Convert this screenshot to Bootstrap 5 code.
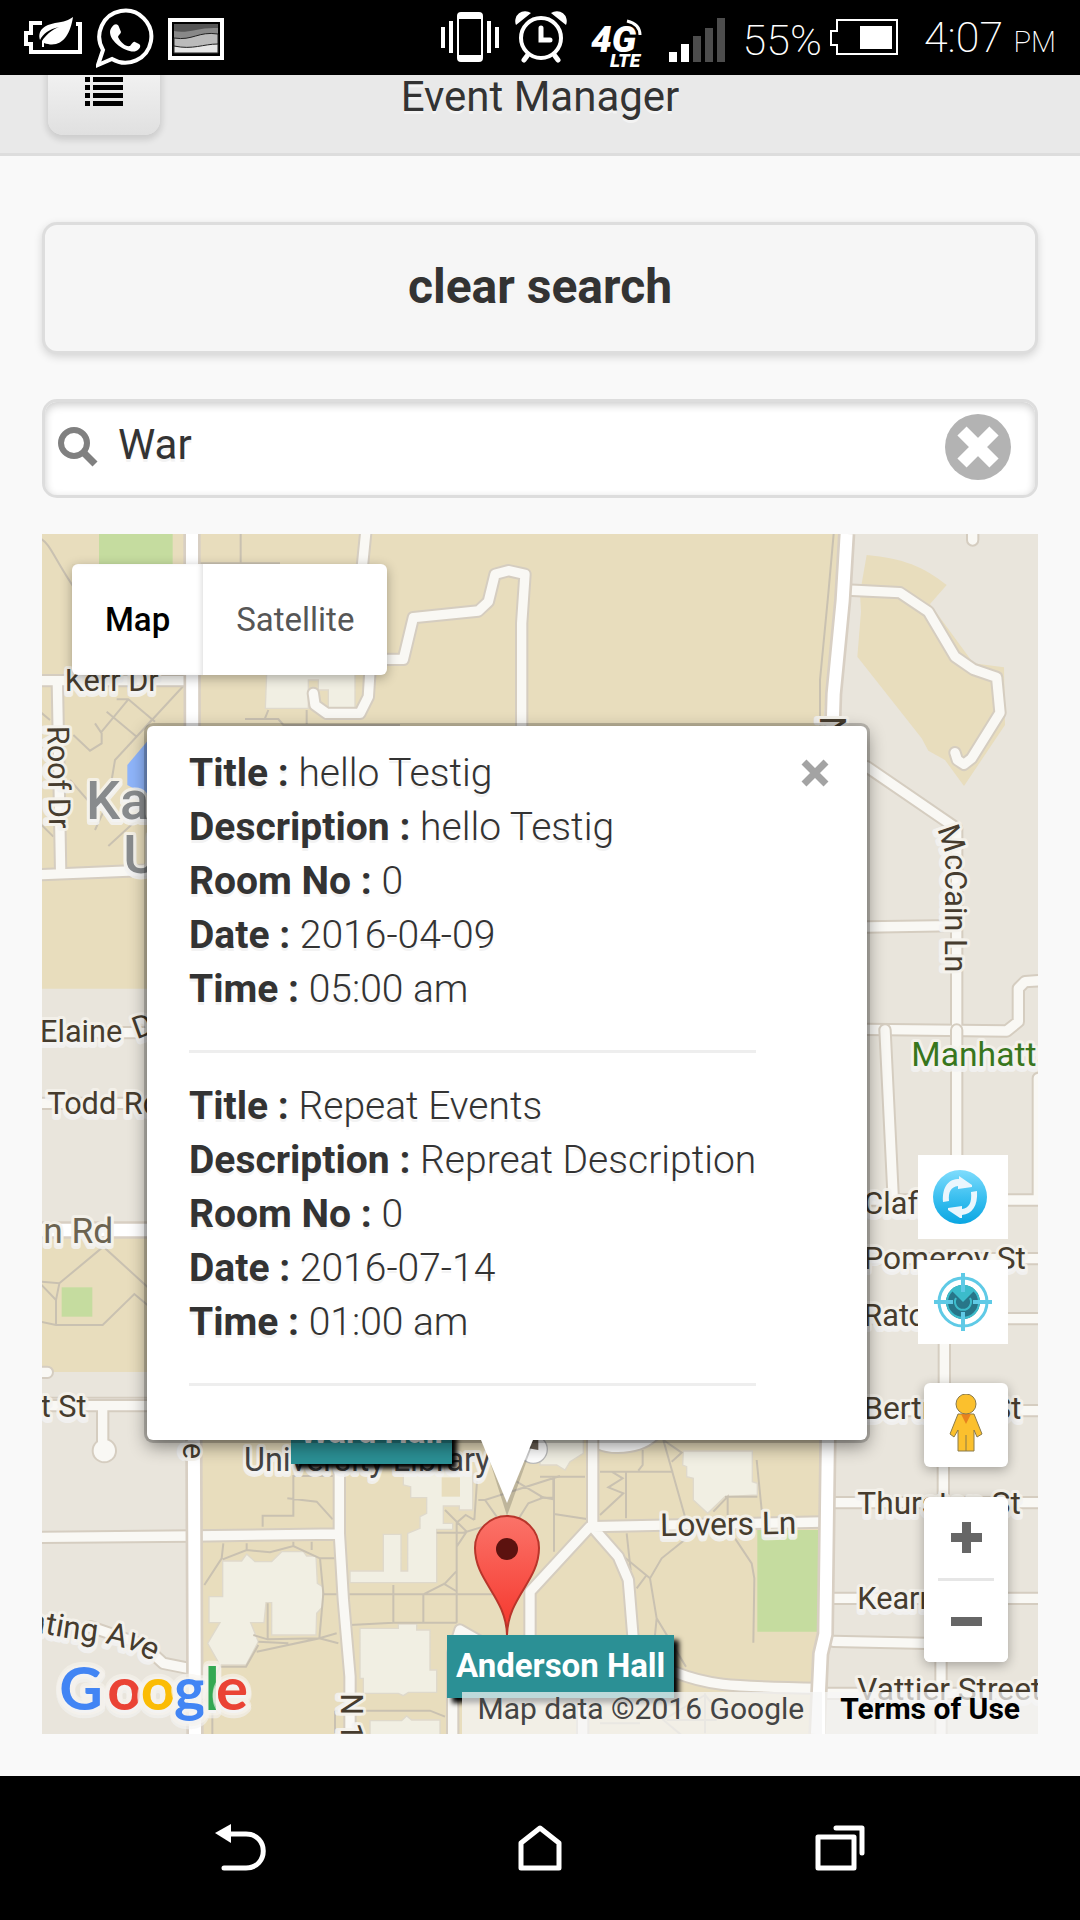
<!DOCTYPE html>
<html lang="en">
<head>
<meta charset="utf-8">
<meta name="viewport" content="width=device-width, initial-scale=1">
<title>Event Manager</title>
<link href="https://cdn.jsdelivr.net/npm/bootstrap@5.3.0/dist/css/bootstrap.min.css" rel="stylesheet">
<style>
body{background:#f9f9f9;color:#333;font-family:Roboto,"Liberation Sans",sans-serif;font-size:39px;line-height:54px;text-shadow:0 3px 0 #f3f3f3}
svg{display:block;flex:none}
button{font-family:inherit}
.status{background:#000;color:#fff;height:75px;padding:0 24px;text-shadow:none;font-weight:200;font-size:43px}
.status .notices{gap:14px}
.status .meridiem{font-size:29px}
.apphead{background:#e9e9e9;border-bottom:3px solid #ddd;height:81px;overflow:hidden}
.apphead h1{font-size:42px;line-height:54px;font-weight:400;margin:0;padding-bottom:29px}
.menu-btn{border:0;width:112px;height:112px;border-radius:15px;background:linear-gradient(#fff,#e0e0e0);box-shadow:0 3px 6px 2px rgba(0,0,0,.12);margin-bottom:18px;padding-top:42px}
.page{padding:66px 42px 42px}
.clear-btn{border:3px solid #ddd;border-radius:15px;background:#f6f6f6;color:#333;font-size:48px;line-height:60px;font-weight:700;padding:32px 33px 34px;box-shadow:0 3px 9px rgba(0,0,0,.15);margin-bottom:45px;text-shadow:0 3px 0 #f3f3f3}
.searchbox{border:3px solid #ddd;border-radius:15px;background:#fff;height:99px;padding:0 24px 4px 12px;box-shadow:inset 0 3px 9px rgba(0,0,0,.2);margin-bottom:36px}
.searchbox label{margin-right:20px}
.searchbox input{border:0;outline:0;background:none;font-size:42px;color:#333;padding:0 0 4px;min-width:0;text-shadow:0 3px 0 #f3f3f3}
.wipe{border:0;background:none;padding:0}
.mapbox{min-height:1200px;background:#e9e5dc}
.mapart{position:absolute;inset:0;width:100%;height:100%}
.maptypes{position:absolute;left:30px;top:30px;box-shadow:0 3px 12px rgba(0,0,0,.3);border-radius:6px;background:#fff}
.maptypes button{border:0;background:none;font-size:33px;line-height:45px;padding:33px;color:#565656}
.maptypes .on{color:#000;font-weight:500;box-shadow:inset -4px 0 5px -2px rgba(0,0,0,.12)}
.info{position:absolute;left:105px;top:192px;width:720px;background:#fff;border-radius:6px;padding:20px 42px 54px;box-shadow:0 0 0 3px rgba(0,0,0,.2),0 6px 18px rgba(0,0,0,.45)}
.info dl{margin:0;width:567px;border-bottom:3px solid #eee;padding-bottom:34px}
.info dl+dl{padding-top:26px}
.info dl>div{white-space:nowrap}
.info dt,.info dd{display:inline;margin:0}
.info dd{font-weight:300}
.info .shut{position:absolute;right:38px;top:33px;border:0;background:none;padding:0}
.beak{position:absolute;left:438px;top:906px}
.marker{position:absolute;left:432px;top:981px}
.tag{position:absolute;background:#2b9095;color:#fff;font-size:33px;line-height:39px;font-weight:700;padding:11px 9px 13px;text-shadow:none;box-shadow:5px 5px 5px #000;white-space:nowrap}
.tag-anderson{left:405px;top:1101px}
.tag-ward{left:249px;top:867px}
.attrib{position:absolute;right:0;bottom:0;font-size:30px;line-height:34px;text-shadow:none}
.attrib>*{background:rgba(245,245,245,.72);padding:0 18px 8px 15px;color:#444;text-decoration:none}
.attrib .terms{color:#000;font-weight:700;border-left:3px solid #fff}
.controls{position:absolute;right:30px;bottom:72px}
.controls button{border:0;background:#fff;padding:0}
.sq{width:90px;height:84px;margin-bottom:21px}
.peg{width:84px;height:84px;border-radius:6px;margin:18px 0 30px;box-shadow:0 3px 12px rgba(0,0,0,.3)}
.zoomer{width:84px;border-radius:6px;box-shadow:0 3px 12px rgba(0,0,0,.3);background:#fff;overflow:hidden}
.zoomer button{width:84px;height:81px}
.zoomer hr{margin:0 14px;border-top:3px solid #e6e6e6;opacity:1}
.softkeys{background:#000;height:144px;padding:0 90px}
.softkeys button{flex:1;border:0;background:none;padding:0}
.rc{fill:none;stroke:#d5cdc0;stroke-width:40;stroke-linejoin:round;stroke-linecap:round}
.rf{fill:none;stroke:#f9f8f4;stroke-width:28;stroke-linejoin:round;stroke-linecap:round}
.bc{fill:none;stroke:#d8cfc3;stroke-width:52}
.bf{fill:none;stroke:#fff;stroke-width:36}
.foot{fill:none;stroke:#c9c1b1;stroke-width:6}
.tan{fill:#e8ddbd}.bld{fill:#f1efe3;stroke:#dfd9cb;stroke-width:4}.park{fill:#c5dc9f}
.lbl text{font-family:Roboto,sans-serif;font-size:92px;fill:#463c2e;stroke:#f6f3ec;stroke-width:18px;stroke-opacity:.85;stroke-linejoin:round;paint-order:stroke}
</style>
</head>
<body class="min-vh-100 d-flex flex-column">
<div class="status d-flex align-items-center justify-content-between">
  <div class="notices d-flex align-items-center">
    <svg width="58" height="75" viewBox="25 0 58 75" fill="none" stroke="#fff" stroke-width="4"><path d="M43 23H32V33H27V44H32V52H81V24H77"/><path fill="#fff" stroke="none" d="M74 17C71 36 62 49 45 43L45 47 43 47 43 41C46 36 52 30 60 27 50 29 44 34 41 40 38 30 46 25 56 23 65 22 70 20 74 17Z"/></svg>
    <svg width="58" height="75" viewBox="97 0 58 75"><path d="M99 65L104 50A26 26 0 1 1 113 59Z" fill="none" stroke="#fff" stroke-width="4"/><path fill="#fff" d="M113 27C116 23 119 24 120 27L122 32C122 34 119 35 119 37 122 43 127 47 131 46 133 44 134 41 136 42L140 44C143 46 140 50 137 51 130 54 111 43 111 32 111 30 112 28 113 27Z"/></svg>
    <svg width="56" height="75" viewBox="170 0 56 75"><path fill="#fff" d="M170 18H226V60H170Z"/><path d="M174 22H222V56H174Z"/><path fill="#555" d="M176 24H220V53H176Z"/><path fill="#888" d="M176 31C190 34 200 27 220 28V53H176Z"/><path fill="#bbb" stroke="#222" d="M176 38C195 41 200 31 220 34V53H176Z"/><path fill="#e6e6e6" stroke="#222" d="M176 46C195 50 205 44 220 44V53H176Z"/></svg>
  </div>
  <div class="d-flex align-items-center gap-3">
    <svg width="58" height="75" viewBox="444 0 58 75" fill="#fff"><path d="M444 27h4v21h-4zM452 21h4v32h-4zM490 21h4v32h-4zM498 27h4v21h-4z"/><path fill-rule="evenodd" d="M464 12h18q4 0 4 4v42q0 4-4 4h-18q-4 0-4-4V16q0-4 4-4zM462 19v36h22V19z"/></svg>
    <svg width="60" height="75" viewBox="519 0 60 75" fill="none" stroke="#fff" stroke-width="4" stroke-linecap="round"><circle cx="545" cy="38" r="20"/><path stroke-width="5" d="M545 28V40H554M531 56L528 60M559 56L562 60"/><path fill="#fff" stroke="none" d="M520 25A10 10 0 0 1 535 13ZM570 25A10 10 0 0 0 555 13Z"/></svg>
    <svg width="60" height="75" viewBox="594 0 60 75" fill="#fff"><g font-family="Roboto,sans-serif" font-style="italic" font-weight="900"><text x="594" y="52" font-size="37">4G</text><text x="613" y="67" font-size="19">LTE</text></g><path d="M630 21Q643 24 643 35" fill="none" stroke="#fff" stroke-width="3"/></svg>
    <svg width="60" height="75" viewBox="671 0 60 75"><path fill="#fff" d="M673 52h8v10h-8zM685 44h8v18h-8z"/><path fill="#4d4d4d" d="M697 36h8v26h-8zM709 28h8v34h-8zM721 18h8v44h-8z"/></svg>
    <div class="d-flex align-items-center"><span class="me-2 pt-1">55%</span>
    <svg class="me-4" width="70" height="75" viewBox="834 0 70 75"><path fill="none" stroke="#fff" stroke-width="2" d="M841 20H901V54H841V45H835V31H841Z"/><path fill="#fff" d="M864 26h32v23h-32z"/></svg>
    <span class="pt-1">4:07 <span class="meridiem">PM</span></span></div>
  </div>
</div>
<header class="apphead position-relative d-flex align-items-end justify-content-center">
  <button class="menu-btn position-absolute bottom-0 start-0 d-flex justify-content-center ms-5" aria-label="Menu"><svg width="38" height="42" viewBox="0 0 38 42"><path d="M0 12h5v5H0zM8 12h30v5H8zM0 20h5v5H0zM8 20h30v5H8zM0 28h5v5H0zM8 28h30v5H8zM0 36h5v5H0zM8 36h30v5H8z"/></svg></button>
  <h1>Event Manager</h1>
</header>
<main class="page flex-grow-1 d-flex flex-column">
  <button class="clear-btn w-100">clear search</button>
  <div class="searchbox d-flex align-items-center">
    <label for="q"><svg width="41" height="42" viewBox="0 0 41 42" fill="none" stroke="#808080" stroke-width="6"><circle cx="17" cy="17" r="13"/><path stroke-width="7" d="M26 26L38 38"/></svg></label>
    <input id="q" type="text" class="flex-grow-1" value="War" aria-label="Search">
    <button class="wipe" aria-label="Clear text"><svg width="66" height="66" viewBox="0 0 66 66"><circle cx="33" cy="33" r="33" fill="#b3b3b3"/><path d="M17 17L49 49M49 17L17 49" stroke="#fff" stroke-width="13"/></svg></button>
  </div>
  <div class="mapbox flex-grow-1 position-relative overflow-hidden">
    <svg class="mapart" viewBox="0 0 2988 3600" preserveAspectRatio="xMidYMid slice">
      <path class="tan" d="M0 0H2400L2340 600V1364H0ZM0 2112H330V2514H0ZM475 2650H2350L2320 3600H475Z"/>
      <!-- north-west campus -->
      <g transform="translate(-6 -12)">
        <path class="park" d="M177 12H398V105H177Z"/><path fill="#8fb5fb" d="M262 705L325 630V800L262 765Z"/>
        <path class="bld" d="M680 430H945V535H865V480H835V450H805V535H676Z"/>
        <path class="foot" d="M0 25C30 40 40 80 100 170M602 12V98M480 100H720M230 508H265L345 575M165 580L185 610V640L150 662 100 615M200 545L290 620M265 508L185 605M430 468L225 690 215 750M290 620L335 570M0 545L30 570M90 750L160 830M165 900L215 790M205 948L290 870M0 880L40 920M615 567H715L730 585H1080M675 565L685 540M800 540V585"/>
        <path class="rc" d="M0 452H440M52 452L62 1030M0 1034L340 1020M978 0L966 120M990 420L985 500 960 550H860L825 525 820 490M1040 388L1090 388 1120 263 1315 243 1345 215 1365 133 1405 122 1455 133 1445 280V590"/>
        <path class="rf" d="M0 452H440M52 452L62 1030M0 1034L340 1020M978 0L966 120M990 420L985 500 960 550H860L825 525 820 490M1040 388L1090 388 1120 263 1315 243 1345 215 1365 133 1405 122 1455 133 1445 280V590"/>
      </g>
      <!-- north-east -->
      <g transform="translate(1494 -12)">
        <path fill="#e9e5dc" d="M920 0H1500V1300H860V560Z"/>
        <path class="tan" d="M980 75C1090 85 1150 110 1220 165L1170 222 1300 400 1392 412 1395 585 1272 768 1215 690 1165 662 1145 625 952 380 963 245 960 190Z"/>
        <path class="foot" d="M882 0L865 190 840 450V590"/>
        <path class="rc" d="M920 180L1080 188 1165 245 1245 380 1300 418 1370 442 1380 548 1295 685 1272 703 1252 690 1245 668M1298 0V30M980 710L1250 895V1500M980 1191L1240 1187M980 1498L1400 1503 1435 1475V1375L1455 1355 1500 1352"/>
        <path class="rf" d="M920 180L1080 188 1165 245 1245 380 1300 418 1370 442 1380 548 1295 685 1272 703 1252 690 1245 668M1298 0V30M980 710L1250 895V1500M980 1191L1240 1187M980 1498L1400 1503 1435 1475V1375L1455 1355 1500 1352"/>
      </g>
      <!-- west -->
      <g transform="translate(-6 1458)">
        <path class="rc" d="M0 38H330M0 250H330M0 1057H22M0 1150H330"/><path class="rf" d="M0 38H330M0 250H330M0 1057H22M0 1150H330"/>
        <path fill="none" stroke="#d8cfc3" stroke-width="52" d="M0 630H330"/><path fill="none" stroke="#fff" stroke-width="38" d="M0 630H330"/>
        <path class="park" d="M65 802H157V890H65Z"/><path class="foot" d="M0 785L58 790 190 680 325 803M58 790L48 840V913M0 790L48 840M0 905L48 915H188L283 822 325 857"/>
      </g>
      <!-- east -->
      <g transform="translate(1974 1458)">
        <path class="rc" d="M555 30L580 540M770 30V540M500 540H1020M1015 175V540M500 716H1020M500 896H1020M733 896V1150M500 1172H1020"/>
        <path class="rf" d="M555 30L580 540M770 30V540M500 540H1020M1015 175V540M500 716H1020M500 896H1020M733 896V1150M500 1172H1020"/>
      </g>
      <!-- south-east -->
      <g transform="translate(1494 2598)">
        <path fill="#e9e5dc" d="M865 100H1500V1010H835L845 720Z"/>
        <path class="park" d="M652 390H835V695H652Z"/>
        <path class="bld" d="M430 153H637V245L652 250V285L555 290 503 340 460 300V235L440 230V200L428 195ZM0 100H130V160L90 185 75 210 50 195H0Z"/>
        <path class="foot" d="M370 120L435 350M180 215H400M308 150V195L295 212M258 215V355M180 345L250 280 205 262 248 235 215 215M0 230H135M42 230V455M0 290L40 298M42 342L140 357M650 180L665 330M555 290H652M520 335L563 290V345M440 415L365 475 330 535 350 655 438 800M260 400L272 510M245 465L330 535M290 565L320 525M585 415L635 490 643 535 640 728M350 655L345 705M370 120L425 158 395 185M180 970H300M380 960H530M495 880V1000M495 885L370 960 430 1010M495 885L540 940"/>
        <path fill="#fff" stroke="#d5cdc0" stroke-width="6" d="M165 100H370C320 165 220 170 165 145Z"/>
        <path class="rc" d="M158 100V370M158 380L850 366M150 380L-30 575V760M165 390L235 470 265 540 283 760M400 815C500 855 550 860 840 865M880 308H1500M880 595H1500M880 724L1160 730M1210 170V308M1203 770V1010M128 870V1010M850 880H1500"/>
        <path class="rf" d="M158 100V370M158 380L850 366M150 380L-30 575V760M165 390L235 470 265 540 283 760M400 815C500 855 550 860 840 865M880 308H1500M880 595H1500M880 724L1160 730M1210 170V308M1203 770V1010M128 870V1010M850 880H1500"/>
      </g>
      <!-- south campus -->
      <g transform="translate(-6 2598)">
        <path class="bld" d="M548 483H605L620 462 645 485H695L725 455H790L800 468H828L832 550 848 560V620L830 640 828 705H695V608H678L672 668H632L655 725 618 795H540L503 730 540 668H507V590H548ZM960 685H1075V672H1130V690H1170V810H1190V877H1105L1090 887 1075 880H970V835H960ZM1090 210H1298V330H1258V318H1210V370H1238V388H1190V548H930V513H1030V403H1083V513H1103V400L1140 385V350L1160 340V293H1112V260L1090 255ZM990 962H1085L1100 948 1115 960H1200V1010H990Z"/>
        <path class="tan" d="M1205 232H1260V290H1205Z"/>
        <path class="foot" d="M760 225V347H668V380M760 228H880M742 295L830 305 878 358M550 430L545 475 493 555M548 478L620 450 690 457 760 438 840 475 850 580 838 715 650 755M620 430V450M760 425V440M815 425V450M840 475H885M850 583H1395M683 610V718L838 715M683 718L640 705M838 715L895 730M838 715L890 700M655 725L745 730M540 800H618L655 735M540 800L517 850V1005M930 675L1060 668H1250M1060 555V668M1150 580V668M1150 583L1215 550 1248 515M1210 550L1248 573M1250 370V668M1215 330L1280 395 1250 440M1248 370L1277 345 1303 360M1303 360L1312 230M1190 398H1270L1330 380M885 932H1170L1215 950M885 932V1000M1315 300H1335L1560 228M1335 300L1370 350M1430 245L1510 293 1465 310 1430 365M1510 293H1540V230"/>
        <path class="rc" d="M0 17H330M188 17V130M0 412L460 408 895 402M898 180V400L910 600 930 830V1010M150 680L310 735 370 790 460 808M1238 1010V760L1260 690 1330 730"/>
        <circle cx="193" cy="152" r="38" fill="#d5cdc0"/>
        <path class="rf" d="M0 17H330M188 17V130M0 412L460 408 895 402M898 180V400L910 600 930 830V1010M150 680L310 735 370 790 460 808M1238 1010V760L1260 690 1330 730"/>
        <circle cx="193" cy="152" r="32" fill="#f9f8f4"/>
        <circle cx="1480" cy="148" r="42" fill="#fff" stroke="#bbb" stroke-width="4"/><path fill="#6b6156" d="M1455 120H1495V150L1465 145Z"/>
      </g>
      <path class="bc" d="M450 0L452 1800 459 3600M2414 0L2402 200 2375 480 2370 640 2358 2700 2350 3300 2336 3360 2325 3600"/>
      <path class="bf" d="M450 0L452 1800 459 3600M2414 0L2402 200 2375 480 2370 640 2358 2700 2350 3300 2336 3360 2325 3600"/>
      <g class="lbl">
        <g transform="translate(-6 -12)"><text x="74" y="483">Kerr Dr</text><text transform="translate(22 588) rotate(89)">Roof Dr</text>
        <g style="font-weight:500"><text x="138" y="868" style="font-size:162px;fill:#888b8d">Ka</text><text x="250" y="1028" style="font-size:162px;fill:#888b8d">U</text></g></g>
        <g transform="translate(1494 -12)"><path id="mccain" fill="none" d="M1192 896L1214 962V1500"/><text><textPath href="#mccain">McCain Ln</textPath></text><text transform="translate(840 558) rotate(90)" style="font-size:108px">N</text></g>
        <g transform="translate(-6 1458)"><text x="0" y="65">Elaine</text><text transform="translate(290 58) rotate(-20)">D</text><text x="22" y="282">Todd Rd</text><text x="10" y="668" style="font-size:106px;fill:#6c6351">n Rd</text></g>
        <g transform="translate(1974 1458)"><text x="634" y="138" style="font-size:101px;fill:#38761d">Manhattan</text><text x="490" y="583">Claflin Rd</text><text x="490" y="747" style="font-size:95px">Pomeroy St</text><text x="490" y="918">Ratone St</text><text x="490" y="1198" style="font-size:95px">Bertrand St</text></g>
        <g transform="translate(1494 2598)"><text transform="translate(361 408) rotate(-1)" style="font-size:95px">Lovers Ln</text><text x="952" y="342" style="font-size:95px">Thurston St</text><text x="952" y="628">Kearney St</text><text x="952" y="900" style="font-size:95px">Vattier Street</text></g>
        <g transform="translate(-6 2598)"><text x="2" y="50">t St</text><text x="612" y="213" style="font-size:97px;fill:#444">University Library</text><text transform="translate(430 128) rotate(90)">e</text><text transform="translate(903 880) rotate(90)">N 17th St</text>
        <path id="ating" fill="none" d="M-38 692L90 715 190 728 270 748 370 800"/><text style="font-size:95px"><textPath href="#ating">ating Ave</textPath></text>
        <text y="930" style="font-family:Lato,sans-serif;font-weight:700;font-size:180px;stroke-width:32px;stroke-opacity:.6"><tspan x="58" fill="#4285f4">G</tspan><tspan x="202" fill="#ea4335">o</tspan><tspan x="302" fill="#fbbc05">o</tspan><tspan x="402" fill="#4285f4">g</tspan><tspan x="494" fill="#34a853">l</tspan><tspan x="528" fill="#ea4335">e</tspan></text></g>
      </g>
    </svg>
    <span class="tag tag-ward">Ward Hall</span>
    <div class="maptypes d-flex"><button class="on">Map</button><button>Satellite</button></div>
    <div class="controls d-flex flex-column align-items-end">
      <button class="sq d-flex align-items-center justify-content-center" aria-label="Refresh"><svg width="60" height="60" viewBox="0 0 60 60"><defs><linearGradient id="sky" x2="0" y2="1"><stop stop-color="#7fdcfd"/><stop offset=".5" stop-color="#3cc0f0"/><stop offset="1" stop-color="#0aa6e2"/></linearGradient></defs><circle cx="27" cy="30" r="27" fill="url(#sky)"/><path fill="#eaf6fd" d="M10 35C9 19 16 12 26 12V9L39 18V20L25 22V19C18 20 15 25 16 34ZM44 24C45 39 39 47 29 48V51L27 51 15 43V41L29 39V42C36 41 39 36 38 25Z"/></svg></button>
      <button class="sq d-flex align-items-center justify-content-center" aria-label="Locate"><svg width="58" height="58" viewBox="0 0 58 58"><circle cx="29" cy="29" r="17" fill="#287689"/><path fill="#3cbccb" d="M29 29L17 17A17 17 0 0 1 41 17Z"/><circle cx="29" cy="29" r="16" fill="none" stroke="#3cbccb" stroke-width="2"/><path fill="none" stroke="#3cbccb" stroke-width="2" d="M22 25A8 8 0 1 0 36 25"/><circle cx="29" cy="29" r="24" fill="none" stroke="#5fcae6" stroke-width="3"/><path stroke="#5fcae6" stroke-width="4" d="M29 0V19M29 39V58M0 29H19M39 29H58"/></svg></button>
      <button class="peg d-flex align-items-center justify-content-center" aria-label="Street View"><svg width="34" height="62" viewBox="0 0 34 62" fill="#fbc02d" stroke="#8a7a4a" stroke-width="1"><path d="M9 20H25L33 40 28 43 25 36V57H9V36L5 43 1 40Z"/><path fill="#e8821e" stroke="none" d="M12 20H22L17 30Z"/><circle cx="17" cy="10" r="10"/><path d="M17 41V57"/></svg></button>
      <div class="zoomer"><button class="d-flex align-items-center justify-content-center" aria-label="Zoom in"><svg width="31" height="31" viewBox="0 0 31 31"><path fill="#666" d="M11 0h9v11h11v9H20v11h-9V20H0v-9h11z"/></svg></button><hr><button class="d-flex align-items-center justify-content-center" aria-label="Zoom out"><svg width="31" height="9"><path fill="#666" d="M0 0h31v9H0z"/></svg></button></div>
    </div>
    <svg class="marker" width="66" height="121" viewBox="0 0 66 121"><defs><linearGradient id="pin" x2="0" y2="1"><stop stop-color="#fb7369"/><stop offset="1" stop-color="#f5352b"/></linearGradient></defs><path fill="url(#pin)" stroke="#b8352b" stroke-width="2" d="M33 120C32 82 1 66 1 33A32 32 0 0 1 65 33C65 66 34 82 33 120Z"/><circle cx="33" cy="34" r="11" fill="#5c120f"/></svg>
    <span class="tag tag-anderson">Anderson Hall</span>
    <div class="attrib d-flex"><span>Map data ©2016 Google</span><a class="terms" href="#">Terms of Use</a></div>
    <div class="info">
      <button class="shut" aria-label="Close"><svg width="28" height="28" viewBox="0 0 28 28"><path d="M3 3L25 25M25 3L3 25" stroke="#a3a3a3" stroke-width="7"/></svg></button>
      <dl><div><dt>Title :</dt> <dd>hello Testig</dd></div><div><dt>Description :</dt> <dd>hello Testig</dd></div><div><dt>Room No :</dt> <dd>0</dd></div><div><dt>Date :</dt> <dd>2016-04-09</dd></div><div><dt>Time :</dt> <dd>05:00 am</dd></div></dl>
      <dl><div><dt>Title :</dt> <dd>Repeat Events</dd></div><div><dt>Description :</dt> <dd>Repreat Description</dd></div><div><dt>Room No :</dt> <dd>0</dd></div><div><dt>Date :</dt> <dd>2016-07-14</dd></div><div><dt>Time :</dt> <dd>01:00 am</dd></div></dl>
    </div>
    <svg class="beak" width="54" height="76" viewBox="0 0 54 76"><path fill="#000" fill-opacity=".18" d="M5 6H52L27 76Z"/><path fill="#fff" d="M1 0H53L27 63Z"/></svg>
  </div>
</main>
<nav class="softkeys d-flex align-items-center">
  <button class="d-flex justify-content-center" aria-label="Back"><svg width="52" height="52" viewBox="214 1822 52 52"><path fill="none" stroke="#fff" stroke-width="5" stroke-linecap="round" d="M228 1834H246C269 1834 269 1868 246 1868H224"/><path fill="#fff" d="M215 1833L231 1824V1843Z"/></svg></button>
  <button class="d-flex justify-content-center" aria-label="Home"><svg width="52" height="52" viewBox="514 1822 52 52"><path fill="none" stroke="#fff" stroke-width="5" stroke-linejoin="round" d="M521 1843L540 1828 559 1843V1868H521Z"/></svg></button>
  <button class="d-flex justify-content-center" aria-label="Recent apps"><svg width="52" height="52" viewBox="814 1822 52 52"><path fill="none" stroke="#fff" stroke-width="5" stroke-linejoin="round" stroke-linecap="round" d="M818 1837H854V1868H818ZM836 1828H862V1853"/></svg></button>
</nav>
<script src="https://cdn.jsdelivr.net/npm/bootstrap@5.3.0/dist/js/bootstrap.bundle.min.js"></script>
</body>
</html>
